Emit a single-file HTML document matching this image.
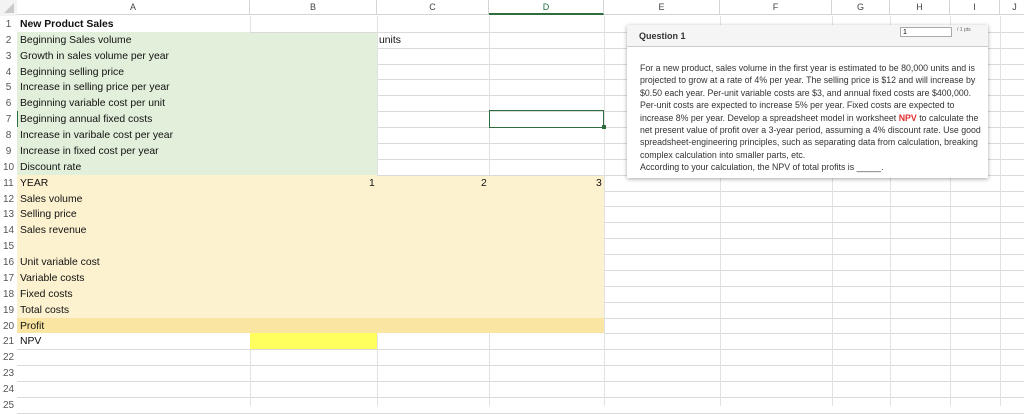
<!DOCTYPE html><html><head><style>
body{margin:0;width:1024px;height:406px;overflow:hidden;background:#fff;font-family:"Liberation Sans",sans-serif;position:relative}
.a{position:absolute}
.hd{top:0;height:15px;border-bottom:1px solid #d4d4d4;border-right:1px solid #d4d4d4;background:#fff;font-size:9px;color:#444;text-align:center;line-height:15px;box-sizing:border-box}
.rn{left:0;width:17px;height:16px;font-size:10px;color:#555;text-align:center;line-height:18px}
.hl{left:17px;width:1010px;height:1px;background:#dadada}
.vl{top:16px;width:1px;height:390px;background:#e2e2e2}
.t{font-size:10.4px;color:#111;line-height:18px;left:20px}
</style></head><body>
<div class="a" style="left:0;top:0;width:17px;height:16px;background:#f3f3f3"></div>
<svg class="a" style="left:2px;top:2px" width="13" height="12"><polygon points="12,1 12,11 2,11" fill="#c9c9c9"/></svg>
<div class="a hd" style="left:17px;width:233px">A</div>
<div class="a hd" style="left:250px;width:127px">B</div>
<div class="a hd" style="left:377px;width:112px">C</div>
<div class="a hd" style="left:489px;width:115px;border-bottom:2px solid #2e6e3e;color:#1e6e3e">D</div>
<div class="a hd" style="left:604px;width:116px">E</div>
<div class="a hd" style="left:720px;width:112px">F</div>
<div class="a hd" style="left:832px;width:58px">G</div>
<div class="a hd" style="left:890px;width:60px">H</div>
<div class="a hd" style="left:950px;width:50px">I</div>
<div class="a hd" style="left:1000px;width:30px">J</div>
<div id="g"></div>
<script>
var R=15.87;function Y(r){return 16+(r-1)*R;}
var h='';
h+='<div class="a" style="left:17px;top:'+Y(2)+'px;width:360px;height:'+(9*R)+'px;background:#e2efda"></div>';
h+='<div class="a" style="left:17px;top:'+Y(11)+'px;width:587px;height:'+(9*R)+'px;background:#fdf2d0"></div>';
h+='<div class="a" style="left:17px;top:'+Y(20)+'px;width:587px;height:'+R+'px;background:#fbe5a2"></div>';
h+='<div class="a" style="left:250px;top:'+Y(21)+'px;width:127px;height:'+R+'px;background:#ffff5e"></div>';
for(var r=1;r<=25;r++){var y=Y(r);h+='<div class="a rn" style="top:'+y+'px">'+r+'</div>';
var lx=(r>=2&&r<=10)?377:((r>=11&&r<=20)?604:17);if(r==1)lx=250;h+='<div class="a hl" style="top:'+(y+R)+'px;left:'+lx+'px;width:'+(1030-lx)+'px"></div>';}
[250,377,489,604,720,832,890,950,1000].forEach(function(x){var t=16;if(x<377)t=Y(22);else if(x<604)t=Y(21);
if(x==377){h+='<div class="a vl" style="left:377px;top:16px;height:'+(Y(11)-16)+'px"></div>';}
if(x==489){h+='<div class="a vl" style="left:489px;top:16px;height:'+(Y(11)-16)+'px"></div>';}
h+='<div class="a vl" style="left:'+x+'px;top:'+t+'px;height:'+(406-t)+'px"></div>';});
h+='<div class="a vl" style="left:250px;top:16px;height:16px"></div>';
var T=[[1,'<b>New Product Sales</b>'],[2,'Beginning Sales volume'],[3,'Growth in sales volume per year'],[4,'Beginning selling price'],[5,'Increase in selling price per year'],[6,'Beginning variable cost per unit'],[7,'Beginning annual fixed costs'],[8,'Increase in varibale cost per year'],[9,'Increase in fixed cost per year'],[10,'Discount rate'],[11,'YEAR'],[12,'Sales volume'],[13,'Selling price'],[14,'Sales revenue'],[16,'Unit variable cost'],[17,'Variable costs'],[18,'Fixed costs'],[19,'Total costs'],[20,'Profit'],[21,'NPV']];
T.forEach(function(e){h+='<div class="a t" style="top:'+Y(e[0])+'px">'+e[1]+'</div>';});
h+='<div class="a t" style="top:'+Y(2)+'px;left:379px">units</div>';
h+='<div class="a t" style="top:'+Y(11)+'px;left:369px">1</div><div class="a t" style="top:'+Y(11)+'px;left:481px">2</div><div class="a t" style="top:'+Y(11)+'px;left:596px">3</div>';
h+='<div class="a" style="left:489px;top:'+(Y(7)-1)+'px;width:115px;height:'+(R+1.5)+'px;border:1.5px solid #2e6e3e;box-sizing:border-box"></div>';
h+='<div class="a" style="left:602px;top:'+(Y(8)-2)+'px;width:4px;height:4px;background:#2e6e3e"></div>';
h+='<div class="a" style="left:17px;top:'+Y(7)+'px;width:1px;height:16px;background:#2e6e3e"></div>';
document.getElementById('g').innerHTML=h;
</script>
<div class="a" style="left:627px;top:25px;width:361px;height:153px;background:#fff;box-shadow:0 1px 4px rgba(0,0,0,.35)">
 <div class="a" style="left:0;top:0;width:361px;height:21px;background:#f5f5f5;border-bottom:1px solid #ccc"></div>
 <div class="a" style="left:12px;top:6px;font-size:9px;font-weight:bold;color:#333">Question 1</div>
 <div class="a" style="left:273px;top:2px;width:52px;height:10px;border:1px solid #aaa;background:#fff;font-size:7px;line-height:10px;padding-left:2px;box-sizing:border-box">1</div>
 <div class="a" style="left:330px;top:2px;font-size:5px;color:#666">/ 1 pts</div>
 <div class="a" style="left:13px;top:37px;white-space:nowrap;font-size:8.8px;line-height:12.4px;color:#333">For a new product, sales volume in the first year is estimated to be 80,000 units and is<br>projected to grow at a rate of 4% per year. The selling price is $12 and will increase by<br>$0.50 each year. Per-unit variable costs are $3, and annual fixed costs are $400,000.<br>Per-unit costs are expected to increase 5% per year. Fixed costs are expected to<br>increase 8% per year. Develop a spreadsheet model in worksheet <b style="color:#e03030">NPV</b> to calculate the<br>net present value of profit over a 3-year period, assuming a 4% discount rate. Use good<br>spreadsheet-engineering principles, such as separating data from calculation, breaking<br>complex calculation into smaller parts, etc.<br>According to your calculation, the NPV of total profits is _____.</div>
</div>
</body></html>
